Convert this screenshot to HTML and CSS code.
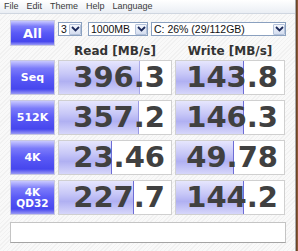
FILE: index.html
```html
<!DOCTYPE html>
<html lang="en">
<head>
    <meta charset="UTF-8">
    <title>CrystalDiskMark</title>
    <link rel="stylesheet" href="styles.css">
</head>
<body>
    <div class="window">
        <div class="menubar">
            <span>File</span><span>Edit</span><span>Theme</span><span>Help</span><span>Language</span>
        </div>
        <div class="main">
            <div class="top">
                <div class="btn all">All</div>
                <div class="top-right">
                    <div class="controls">
                        <div class="combo c-count"><span>3</span><i class="arrow"><svg width="9" height="6" viewBox="0 0 9 6"><polyline points="1,1 4.5,4.5 8,1" fill="none" stroke="#1c2a5a" stroke-width="1.8"/></svg></i></div>
                        <div class="combo c-size"><span>1000MB</span><i class="arrow"><svg width="9" height="6" viewBox="0 0 9 6"><polyline points="1,1 4.5,4.5 8,1" fill="none" stroke="#1c2a5a" stroke-width="1.8"/></svg></i></div>
                        <div class="combo c-drive"><span>C: 26% (29/112GB)</span><i class="arrow"><svg width="9" height="6" viewBox="0 0 9 6"><polyline points="1,1 4.5,4.5 8,1" fill="none" stroke="#1c2a5a" stroke-width="1.8"/></svg></i></div>
                    </div>
                    <div class="heads">
                        <div>Read [MB/s]</div>
                        <div>Write [MB/s]</div>
                    </div>
                </div>
            </div>

            <div class="results">
                <div class="btn">Seq</div>
                <div class="val" style="--w: 71.9%">396.3</div>
                <div class="val" style="--w: 63.2%">143.8</div>

                <div class="btn">512K</div>
                <div class="val" style="--w: 71.1%">357.2</div>
                <div class="val" style="--w: 63.3%">146.3</div>

                <div class="btn">4K</div>
                <div class="val" style="--w: 47.4%">23.46</div>
                <div class="val" style="--w: 53.9%">49.78</div>

                <div class="btn two">4K<br>QD32</div>
                <div class="val" style="--w: 67.1%">227.7</div>
                <div class="val" style="--w: 63.2%">144.2</div>
            </div>

            <div class="comment"></div>
        </div>
    </div>
    <div class="edge"></div>
</body>
</html>
```

FILE: styles.css
```css
body { margin: 0; display: flex; height: 251px; overflow: hidden; font-family: "Liberation Sans", Arial, sans-serif; background: #7b4a2c; }
.window { width: 295px; border-right: 1px solid #a9a9a9; background: repeating-linear-gradient(135deg, #f9f9f9 0 2px, #f1f1f1 2px 3px); }
.edge { flex: 1; background: linear-gradient(90deg, #5e3a22, #9a6440); }

.menubar { height: 13px; border-bottom: 1px solid #cfd6e0; background: linear-gradient(#ffffff, #eaeef4); font-size: 9px; line-height: 12px; color: #3a3a3a; }
.menubar span { padding: 0 4px; }

.main { padding: 6px 0 0 10px; }

.top { display: flex; height: 40px; }
.top-right { margin-left: 3px; }
.controls { display: flex; margin-top: 2px; height: 14px; }
.combo { display: flex; align-items: center; justify-content: space-between; box-sizing: border-box; height: 14px; background: #fff; border: 1px solid #8aa0bf; font-size: 10.5px; color: #111; padding-left: 2px; }
.c-count { width: 24px; }
.c-size { width: 60px; margin-left: 6px; }
.c-drive { width: 135px; margin-left: 3px; }
.arrow { display: flex; align-items: center; justify-content: center; width: 12px; height: 11px; margin-right: 0; border: 1px solid #b4c2da; border-radius: 1px; background: linear-gradient(#f4f7fd, #d4ddef); box-sizing: border-box; }

.heads { display: grid; grid-template-columns: 114px 110px; column-gap: 3px; padding-top: 8px; font-family: "DejaVu Sans", sans-serif; font-weight: bold; font-size: 12px; line-height: 14px; color: #333; text-align: center; }

.btn { display: flex; align-items: center; justify-content: center; box-sizing: border-box; border: 1px solid #c9c9e0; background: linear-gradient(#c8c8ff 0%, #7c7cfa 22%, #5a5af6 50%, #4646ee 85%, #9a9af6 100%); color: #fff; font-family: "DejaVu Sans", sans-serif; font-weight: bold; font-size: 11px; line-height: 11px; text-align: center; }
.all { width: 45px; height: 26px; font-size: 13px; }
.two { font-size: 10.5px; line-height: 11px; }

.results { display: grid; grid-template-columns: 45px 114px 110px; grid-auto-rows: 35px; column-gap: 3px; row-gap: 5px; }
.val { box-sizing: border-box; border: 1px solid #d0d0d0; background-color: #fff; background-image: linear-gradient(to left, #6d6dd6 0 1px, transparent 1px), linear-gradient(#e6e6fd 0%, #c6c6f7 40%, #b0b0f2 62%, #d6d6fa 100%); background-size: var(--w) 100%; background-repeat: no-repeat; padding-right: 6px; text-align: right; font-family: "DejaVu Sans", sans-serif; font-weight: bold; font-size: 29px; line-height: 33px; color: #404040; }

.comment { width: 276px; height: 21px; margin-top: 7px; box-sizing: border-box; background: #fff; border: 1px solid #c4c4c4; border-bottom-color: #a4a4a4; }
```
